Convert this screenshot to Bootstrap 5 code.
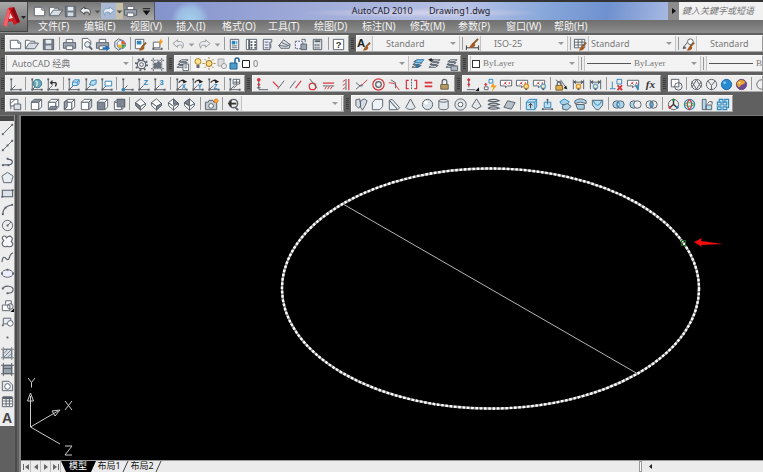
<!DOCTYPE html>
<html lang="zh-CN">
<head>
<meta charset="utf-8">
<meta name="viewport" content="width=device-width, initial-scale=1">
<title>AutoCAD 2010 Drawing1.dwg</title>
<link href="https://cdn.jsdelivr.net/npm/bootstrap@5.3.0/dist/css/bootstrap.min.css" rel="stylesheet">
<style>
:root{--face:#ededed;--frame:#606060;--ink:#59616b}
body{font:10px/12px "Noto Sans","Noto Sans CJK SC",sans-serif;background:var(--frame);color:#222;overflow:hidden}
button,select,input{font:inherit;color:inherit;border:0;border-radius:0;padding:0;margin:0;background:none}
svg{display:block}
.head{border-top:2px solid #333;background:linear-gradient(#888 18px,#6f6f6f 18px,#8d8d8d)}
.applogo{width:28px;height:30px;background:linear-gradient(#aaa,#686868);border-right:1px solid #444;border-bottom:1px solid #444}
.titlebar{height:18px}
.quick{width:127px;padding-left:4px;background:linear-gradient(#777,#aaa);border-right:1px solid #555}
.quick .tool{flex:1 1 16px}
.quick .tool.slim{flex:0 0 7px}
.quick .tool:nth-child(6){background:#a9b8d3}
.quick .tool:nth-child(7){background:#c6bfa9}
.caption-area{background:radial-gradient(circle at 35px 18px,#a4d0ee 0,#9bbce2 12px,transparent 19px),radial-gradient(ellipse at 52% 60%,#d3d3ea 0,transparent 32%),linear-gradient(100deg,#8493cc,#a6b1dc 38%,#b9c3e6 60%,#87a7da 76%,#6f91cf 88%,#a7b9e2);font-size:9px;color:#1c1c2c}
.caption-area span{white-space:pre}
.caption-left{flex:196 1 0}
.caption-right{flex:177 1 0}
.search-go{width:11px;background:#8c8c8c;color:#111}
.search-box{width:84px;background:#f1f1f1;font-size:9px;font-style:italic;padding-left:3px;outline:0}
.search-box::placeholder{color:#777;opacity:1}
.menus{height:13px;padding-left:10px}
.menus a{flex:0 0 auto;width:46px;color:#f4f4f4;text-decoration:none;line-height:13px;white-space:nowrap}
.menus .wide{width:48px}
.bars{padding:2px 0 3px;gap:3px;white-space:nowrap}
.strip{height:17px}
.grip{flex:0 0 5px;margin:0 1px;background:repeating-linear-gradient(#3c3c3c 0 1px,#5e5e5e 1px 2px) center/3px 12px no-repeat}
.grip:first-child{margin:0}
.bar{background:var(--face);border:1px solid #f8f8f8;border-right-color:#999;border-bottom-color:#aaa;padding:0 1px;flex:0 0 auto}
.bar.grow-bar{flex:1 1 0;overflow:hidden}
.tool{flex:1 1 17px;min-width:0;height:16px;display:flex;align-items:center;justify-content:center}
.tool:hover{background:#cfe2f5}
.tool svg{flex:none}
.tool.slim{flex:0 0 9px}
.split{flex:0 0 1px;margin:1px 2px;background:#999}
.drop{position:relative;display:flex;background:#f3f3f3;border:1px solid #c4c4c4;border-width:0 1px;color:#777;flex:0 0 auto}
.drop select{appearance:none;width:100%;outline:0;font-size:9px;line-height:15px}
.drop::after{content:"";position:absolute;right:3px;top:6px;border:3px solid transparent;border-top-color:#999;pointer-events:none}
.serif select{font-family:"Liberation Serif","Noto Sans CJK SC",serif;font-size:9px}
.pad-a select{padding-left:13px}.pad-b select{padding-left:2px}.pad-c select{padding-left:5px}
.swatch::before{content:"";align-self:center;flex:none;width:8px;height:8px;margin:0 3px 0 1px;border:1px solid #333;background:#fff}
.stroke::before{content:"";align-self:center;flex:none;width:44px;height:1px;margin:0 3px 0 2px;background:#555}
.w-style{width:88px}.w-space{width:127px}.w-layer{width:219px}.w-color{width:109px}.w-line{width:117px}.w-view{width:101px}
.t-std{width:344px}.t-space{width:162px}.t-layer{width:287px}.t-ucs{width:240px}.t-con{width:203px}.t-par{width:199px}.t-view{width:339px}.t-solid{width:382px}
.side{flex:0 0 15px;background:var(--face);align-self:flex-start;padding-bottom:1px;border-right:1px solid #999}
.side .tool{flex:none;height:16px;width:14px}
.side .handle{height:6px;background:#484848;border-top:1px solid #777}
.gutter{flex:0 0 6px;background:linear-gradient(90deg,#4c4c4c 2px,#606060 2px 4px,#808080 4px)}
.pane{min-width:0;min-height:0}
.board{background:#000;min-height:0;border-top:1px solid #777}
.board svg{width:100%;height:100%}
.foot{height:12px;flex:none;background:#ebebeb;border-top:1px solid #999;font-size:9px;line-height:9px}
.foot .step{width:10px;height:11px;border-right:1px solid #bbb;display:flex;align-items:center;justify-content:center}
.foot .sheet{width:26px;height:9px;color:#111;line-height:9px;white-space:nowrap}
.foot .sheet.on{width:24px;height:11px;padding-bottom:2px;background:#000;color:#fff}
.knob{width:3px;background:#fff;border:1px solid #999}
.foot-gap{flex:478 1 0}
.scroll-track{flex:107 1 0}
</style>
<script src="https://cdn.jsdelivr.net/npm/bootstrap@5.3.0/dist/js/bootstrap.bundle.min.js" defer></script>
</head>
<body class="d-flex flex-column vh-100">
<header class="head d-flex">
  <button class="applogo d-flex align-items-center justify-content-center" aria-label="应用程序菜单">
    <svg width="26" height="28" viewBox="0 0 26 28"><path d="M2 22 7 5l6-1 6 15-6 3-2-4-4 1-1 4z" fill="#d01a22"/><path d="M2 22 7 5l2 3-3 16z" fill="#f1606a"/><path d="m13 4 6 15-3 1L10 7z" fill="#8a0b11"/><path d="m9 10 3 5-4 1z" fill="#ddd"/><path d="M20 13h5l-2.500 3z" fill="#222"/></svg>
  </button>
  <div class="flex-grow-1 d-flex flex-column overflow-hidden">
    <div class="titlebar d-flex">
      <div class="quick d-flex align-items-center" data-tools="new open save undoL caret redoL caret print more"></div>
      <div class="caption-area flex-grow-1 d-flex align-items-center"><span class="caption-left"></span><span>AutoCAD 2010       Drawing1.dwg</span><span class="caption-right"></span></div>
      <button class="search-go d-flex align-items-center justify-content-center" aria-label="展开"><svg width="6" height="8"><path d="M1 1v6l4-3z" fill="#111"/></svg></button>
      <input class="search-box" type="text" aria-label="搜索" placeholder="鍵入关鍵字或短语">
    </div>
    <nav class="menus d-flex" aria-label="菜单">
      <a href="#">文件(F)</a><a href="#">编辑(E)</a><a href="#">视图(V)</a><a href="#">插入(I)</a><a href="#">格式(O)</a><a href="#">工具(T)</a><a href="#" class="wide">绘图(D)</a><a href="#" class="wide">标注(N)</a><a href="#" class="wide">修改(M)</a><a href="#" class="wide">参数(P)</a><a href="#" class="wide">窗口(W)</a><a href="#">帮助(H)</a>
    </nav>
  </div>
</header>

<section class="bars d-flex flex-column" aria-label="工具栏">
  <div class="strip d-flex">
    <i class="grip"></i>
    <div class="bar t-std d-flex" data-tools="new open save | print preview publish dwf | match block | undoG caretG redoG caretG | props center palette sheets markup calc | help"></div>
    <i class="grip"></i>
    <div class="bar grow-bar d-flex px-0">
      <div class="d-flex flex-shrink-0" data-tools="textstyle"></div>
      <label class="drop w-style pad-a"><select aria-label="文字样式"><option>Standard</option></select></label>
      <i class="split"></i><div class="d-flex flex-shrink-0" data-tools="dimstyle"></div>
      <label class="drop w-style pad-a"><select aria-label="标注样式"><option>ISO-25</option></select></label>
      <i class="split"></i><div class="d-flex flex-shrink-0" data-tools="tablestyle"></div>
      <label class="drop w-style pad-b"><select aria-label="表格样式"><option>Standard</option></select></label>
      <i class="split"></i><div class="d-flex flex-shrink-0" data-tools="leader"></div>
      <label class="drop w-style pad-a"><select aria-label="引线样式"><option>Standard</option></select></label>
    </div>
  </div>
  <div class="strip d-flex">
    <i class="grip"></i>
    <div class="bar t-space d-flex px-0">
      <label class="drop w-space pad-c"><select aria-label="工作空间"><option>AutoCAD 经典</option></select></label>
      <div class="d-flex flex-grow-1" data-tools="gear wsave"></div>
    </div>
    <i class="grip"></i>
    <div class="bar t-layer d-flex px-0">
      <div class="d-flex" data-tools="layers"></div>
      <label class="drop w-layer pad-b">
        <svg class="flex-shrink-0" width="60" height="15" viewBox="0 0 60 15"><circle cx="7" cy="5.500" r="3" fill="#ffe58a" stroke="#a98533"/><path d="M5.500 9h3v3h-3z" fill="#667"/><circle cx="18" cy="7.500" r="3" fill="#ffe27a" stroke="#996d22"/><path d="M18 1v2m0 9v2M11.500 7.500h2m9 0h2M13.500 3l1.500 1.500m6 6 1.500 1.500m0-9L21 4.500m-6 6L13.500 12" stroke="#b08538"/><path d="M27 3h6v7h-6z" fill="#ddd" stroke="#aaa"/><circle cx="33" cy="10" r="2.500" fill="#eee" stroke="#999"/><path d="M39 7h7v6h-7z" fill="#4b9dce" stroke="#24638f"/><path d="M44 7V4a2 2 0 0 1 4 0v2" fill="none" stroke="#24638f" stroke-width="1.500"/><path d="M51.500 4.500h7v7h-7z" fill="#fff" stroke="#222"/></svg>
        <select aria-label="图层"><option>0</option></select></label>
      <div class="d-flex flex-grow-1" data-tools="laymake layprev layerstate"></div>
    </div>
    <i class="grip"></i>
    <div class="bar grow-bar d-flex">
      <label class="drop w-color serif swatch"><select aria-label="颜色"><option>ByLayer</option></select></label>
      <i class="split"></i>
      <label class="drop w-line serif stroke"><select aria-label="线型"><option>ByLayer</option></select></label>
      <i class="split"></i>
      <label class="drop w-line serif stroke"><select aria-label="线宽"><option>ByLayer</option></select></label>
    </div>
  </div>
  <div class="strip d-flex">
    <i class="grip"></i>
    <div class="bar t-ucs d-flex" data-tools="ucs | ucsworld ucsprev | ucsface ucsobj ucsview | ucsorg ucsz ucs3 | ucsrx ucsry ucsrz | ucsapply"></div>
    <i class="grip"></i>
    <div class="bar t-con d-flex" data-tools="coincident perp parallel tangent horiz vert collinear concentric smooth symmetric equal fix"></div>
    <i class="grip"></i>
    <div class="bar t-par d-flex" data-tools="gcon autocon showcon showall hideall | dimcon dimshow dimhide | delcon consettings fx"></div>
    <i class="grip"></i>
    <div class="bar grow-bar d-flex px-0"><div class="d-flex flex-shrink-0" data-tools="wire2d | wire3d hidden realistic concept | manage"></div></div>
  </div>
  <div class="strip d-flex">
    <i class="grip"></i>
    <div class="bar t-view d-flex">
      <div class="d-flex flex-grow-1" data-tools="named | ctop cbottom cleft cright cfront cback | isw ise ine inw | camera | prevview"></div>
      <label class="drop w-view pad-b"><select aria-label="视口缩放"><option></option></select></label>
    </div>
    <i class="grip"></i>
    <div class="bar t-solid d-flex" data-tools="polysolid box wedge cone sphere cylinder torus pyramid helix plane | extrude presspull sweep revolve loft | union subtract intersect | orbit rotate3d align3d array3d"></div>
  </div>
</section>

<main class="pane d-flex flex-grow-1">
  <div class="side d-flex flex-column" aria-label="绘图">
    <div class="handle"></div>
    <div class="d-flex flex-column" data-tools="line xline pline polygon rect arc circle cloud spline ellipse earc insert mkblock point hatch gradient region table mtext"></div>
  </div>
  <div class="gutter"></div>
  <div class="pane flex-grow-1 d-flex flex-column">
    <div class="board flex-grow-1">
      <svg viewBox="21 116 742 344" role="img" aria-label="椭圆和直径线" fill="none">
        <ellipse cx="490.500" cy="288.500" rx="208.500" ry="120" stroke="#8f8f8f" stroke-width="2.400"/>
        <ellipse cx="490.500" cy="288.500" rx="208.500" ry="120" stroke="#fff" stroke-width="2.400" stroke-dasharray="2.500 1.800"/>
        <path d="m343 204 295 170" stroke="#b5b5b5"/>
        <path d="M681.500 240.500h4v5h-4z" stroke="#18751c"/>
        <path d="m694 242 8-4-1 3 22 3-22 1 1 2z" fill="#f20c0c"/>
        <g stroke="#ccc"><path d="M30.500 396v31L58 411M30.500 427 60 444"/><path d="m30.500 393-3 8h6zM60 410l-8 1 3 5z"/><path d="m28 378 3.500 4.500 3.500-4.500m-3.500 4.500v5M65 401l7 9m0-9-7 9M65 446h7l-7 9h7"/></g>
      </svg>
    </div>
    <footer class="foot d-flex">
      <button class="step" aria-label="第一个"><svg width="8" height="8"><path d="M1.500 1v6" stroke="#666"/><path d="M7 1v6L3 4z" fill="#666"/></svg></button>
      <button class="step" aria-label="上一个"><svg width="8" height="8"><path d="M6 1v6L2 4z" fill="#666"/></svg></button>
      <button class="step" aria-label="下一个"><svg width="8" height="8"><path d="M2 1v6l4-3z" fill="#666"/></svg></button>
      <button class="step" aria-label="最后一个"><svg width="8" height="8"><path d="M6.500 1v6" stroke="#666"/><path d="M1 1v6l4-3z" fill="#666"/></svg></button>
      <svg width="5" height="11"><path d="M0 0h5v11z" fill="#000"/></svg>
      <button class="sheet on">模型</button>
      <svg width="6" height="11"><path d="M0 0h6L1 11H0z" fill="#000"/></svg>
      <button class="sheet">布局1</button>
      <svg width="7" height="11"><path d="M6 0 1 11" stroke="#444"/></svg>
      <button class="sheet">布局2</button>
      <svg width="7" height="11"><path d="M6 0 1 11" stroke="#444"/></svg>
      <span class="foot-gap"></span>
      <i class="knob"></i>
      <button class="step border-0 ms-1" aria-label="向左滚动"><svg width="6" height="8"><path d="M4 1v5L1 3.500z" fill="#222"/></svg></button>
      <span class="scroll-track"></span>
    </footer>
  </div>
</main>

<script>
const K='#59616b', B='#2f86bd', R='#d8343c';
const p=(d,s=K,f='none',w=1)=>`<path d="${d}" stroke="${s}" fill="${f}" stroke-width="${w}"/>`;
const c=(x,y,r,s=K,f='none',w=1)=>`<circle cx="${x}" cy="${y}" r="${r}" stroke="${s}" fill="${f}" stroke-width="${w}"/>`;
const t=(x,y,s,col=B,size=8)=>`<text x="${x}" y="${y}" fill="${col}" font-size="${size}" font-weight="700" font-family="Liberation Sans,sans-serif">${s}</text>`;
const dots=(...a)=>a.map(([x,y])=>p(`M${x-1} ${y-1}h2v2h-2z`,'none',K)).join('');
const axes=p('M3.500 2v11.500H14M3.500 13.500 8 9')+dots([3.5,2.5],[3.5,13.5],[13.5,13.5]);
const brush=p('m14 6-4 4','#8b5a2b','none',2)+p('M10 9c-2 1-2 4-4 5 3 1 6 0 6-3z','none','#a9581f');
const cube=(a,b,d)=>p('M2.500 5.500h8v8h-8z',K,a)+p('m2.500 5.500 3-3h8l-3 3z',K,b)+p('m10.500 5.500 3-3v8l-3 3z',K,d);
const iso=(a,b,d)=>p('m8 2 5.500 5L8 10 2.500 6z',K,a)+p('M2.500 6 8 10v4L3 9.500z',K,b)+p('m13.500 7-.5 2.500L8 14v-4z',K,d);
const tag=p('M1.500 3.500h12v6H9l-2 2v-2H1.500z',K,'#fff')+p('m5 8 3-3m0 3-2-2',R)+c(11,6.5,.5,R,R);
const dim=p('M2.500 3v10M13.500 3v10M2.500 5.500h11')+p('m3 5.500 2-1.500v3zM13 5.500 11 4v3z',K,K);
const lock=(x,y)=>p(`M${x+1.5} ${y}v-2a2 2 0 0 1 4 0v2`,K,'none',1.3)+p(`M${x} ${y}h7v5h-7z`,'#7b622f','#dcae4a');
const bulb=(x,y,f)=>c(x,y,2.3,f,'#fff1b0',1.5)+p(`M${x} ${y+2}v2`,K,'none',2);
const printer=p('M4.500 6V2.500h7V6',K,'#fff')+p('M1.500 6h13v6h-13z',K,'#9aa3ae')+p('M4.500 9.500h7v4h-7z',K,'#fff');
const sheet=p('M2.500 3.500h8l3 3v6h-11z',K,'#fff')+p('M10.500 3.500v3h3',K,'#ccd');
const folder=p('M1.500 12.500v-9h4l1 1h5v3',K,'#fff')+p('m1.500 12.500 4-6h10l-4 6z',K,'#d8dde3');
const disk=p('M2.500 2.500h11v11h-11z',K,'#727a86',1)+p('M5 3h6v4H5z','none','#e9eef3')+p('M5 9h6v4H5z','none','#d3dae1');
const undo=s=>p('M7 3 2 7l5 4V9c4-1 5 0 5 3 3-5 0-8-5-7z',s,'#e9edf2');
const redo=s=>p('m9 3 5 4-5 4V9c-4-1-5 0-5 3-3-5 0-8 5-7z',s,'#e9edf2');
const stack=p('m4 5 3-2h7l-3 2zM3 8l3-2h7l-3 2zM2 11l3-2h7l-3 2z',K,'#dfe5ea');
const swirl=(a,b)=>c(6,8,4,K,a)+c(10,8,4,K,b);
const icons={
new:['新建',sheet],open:['打开',folder],save:['保存',disk],print:['打印',printer],
undoL:['放弃',undo('#444')],redoL:['重做',redo('#7d9dc0')],undoG:['放弃',undo('#999')],redoG:['重做',redo('#999')],
caret:['列表',p('M5 7h6l-3 3z','none','#555')],caretG:['列表',p('M5 7h6l-3 3z','none','#999')],more:['自定义',p('M4 5h8',"#111")+p('M4 7h8l-4 5z','none','#111')],
preview:['打印预览',p('M3.500 13.500v-12h6l3 3v4',K,'#fff')+c(9,8,3,K,'#e8f0f6')+p('m11 10 3 3.500',K,'none',2)],
publish:['发布',printer+p('M8 11h4V8.500l4 3.500-4 3.500V13H8z','none','#1c72bd')],
dwf:['三维DWF',p('m3 5 4-3 5 2v7l-5 3-4-3z',K,'#e3e7ec')+c(10,8,4.5,'#5a79a2','#fff')+p('M10 8V4a4 4 0 0 1 4 4z','none','#e45238')+p('M10 8h4a4 4 0 0 1-4 4z','none','#45a64c')+p('M10 8v4a4 4 0 0 1-4-4z','none','#f0b43a')],
match:['特性匹配',p('M2.500 2.500h9v10h-9z',K,'#fff')+p('M4 4h5v4H4z','none',B)+brush],
block:['块编辑器',p('M3.500 5.500h7v6h-7z',K,'#fff')+dots([3.5,12.5],[12.5,12.5])+p('M3 13h10')+p('m12 1-3 5h2l-1 4 4-6h-2z','none','#f19b17')],
props:['特性',p('M3.500 2.500h9v11h-9z',K,'#fff')+p('M5 4h4v4H5zM10 4h1v4h-1z','none',B)+p('M5 9.500h6M5 11.500h6')],
center:['设计中心',p('M2.500 2.500h11v11h-11z',K,'#fff')+p('M5.500 3v10M7 5.500h2m2 0h2M7 8.500h2m2 0h2M7 11.500h2m2 0h2',K,'none',2)],
palette:['工具选项板',p('M3.500 2.500h9v3h-2v8h-7z',K,'#eef')+p('M5 5.500h4M5 8.500h4M5 11.500h4M11.500 7v5')],
sheets:['图纸集',p('m2 9 5-6 7 5-1 4H4z',K,'#dfe4ea')+p('m2 9 8 1 4-2M5 6l7 3')],
markup:['标记集',p('M2.500 4.500h8v8h-8z',K,'#eef','1" stroke-dasharray="2 1')+p('M8.500 7.500h6v6h-6z',K,'#9aa5b2')+p('M9 2.500h4v3')],
calc:['计算器',p('M3.500 2.500h9v11h-9z',K,'#e0e4e8')+p('M5 4.500h6',K,'none',2)+p('M5 8.500h6M5 11.500h6',K,'none','2" stroke-dasharray="1 1')],
help:['帮助',p('M2.500 2.500h11v11h-11z',K,'#fff')+t(5,12,'?','#333',10)],
textstyle:['文字样式',t(0,11,'A','#222',12)+brush],dimstyle:['标注样式',p('M1.500 9v5M14.500 9v5M2 11.500h12','#333')+p('m14 2-6 6','#8b5a2b','none',2)+p('M9 6c-2 0-3 4-5 5 3 1 7 0 7-3z','none','#a9581f')],
tablestyle:['表格样式',p('M1.500 2.500h11v9h-11z',K,'#fff')+p('M2 5.500h10M2 8.500h10M5.500 3v8M9.500 3v8')+brush],leader:['多重引线样式',p('m2 12 6-8')+c(10,5,3,K,'#fff')+p('m2 13 4-1-3-3z','none',K)+brush],
gear:['设置',c(8,8,4.5,K,'none',1.3)+c(8,8,2)+c(8,8,6,K,'none','2" stroke-dasharray="2 2.700')],
wsave:['工作空间',p('M3.500 1v14M12.500 1v14M1 3.500h14M1 12.500h14',K,'none','1" stroke-dasharray="2 1')+p('M4 6h3l2-2 3 2v6H4z','none','#69727e')],
layers:['图层特性',stack+p('M8.500 7.500h6v7h-6z',K,'#fff')+p('M10 9.500h3m-3 2h3')],laymake:['置为当前',stack+p('m5 6 3-3h7l-3 3z',B,'#8cc5e8')+p('M9 7c-2 0-2 3-4 4 3 1 5 0 5-2z','none','#2c74a6')],layprev:['上一个图层',stack+p('m1 3 4-2v4z','none','#222')+p('M3 3h4','#222')],layerstate:['图层状态',stack+p('M7.500 9.500h7v5h-7z',K,'#aeb8c4')],
ucs:['UCS',axes],ucsworld:['世界',axes+c(9,7,4.5,'#38778a','#68a7bd')+p('m7 4 2 2-1 4','#d6efe0','none',1.5)],ucsprev:['上一个',axes+p('M7 6h4q2 1 0 4','#333','none',1.5)+p('m5 6 3-3v6z','none','#333')],
ucsface:['面',axes+p('M7 5.500 9 3h5v4l-2 2H7zM7 5.500h5V9M12 5.500 14 3',B,'#d9edf8')],ucsobj:['对象',axes+p('m7 8 2-4 5-1v4l-3 2z',B,'#b8dbed')],ucsview:['视图',axes+p('M6.500 4.500h7v5h-7z',B,'#fff')],ucsorg:['原点',axes+c(3.5,13.5,1.5,B,B)],ucsz:['Z轴',axes+t(8,8,'Z')],ucs3:['三点',axes+t(8,9,'3')],
...Object.fromEntries(['x','y','z'].map(a=>['ucsr'+a,['旋转'+a,axes+p('M5 6q3-4 6-1','#222','none',1.300)+p('m9 2 5 3-4 2z','none','#222')+t(8,13,a.toUpperCase(),B,7)]])),
ucsapply:['应用',axes+p('M6.500 2.500h7v5h-7zM10 3v5M7 5.500h7M7 12l4-4',K,'#fff')],
coincident:['重合',p('M4 3v8',K)+c(4,3,1.5,R,R)+c(4,8,1,R,R)+p('M4 13.500h10M2 11.500h4M4 9v4')],perp:['垂直',p('m7 13 7-9')+p('m2 5 6 6',R,'none',1.3)],parallel:['平行',p('m2 12 6-8')+p('m8 12 6-8',R,'none',1.3)],tangent:['相切',c(8,10,3.5,R,'none',1.3)+p('m5 2 8 10')],horiz:['水平',p('M2 6.500h12',R,'none',1.3)+p('M2 9.500h12')+p('m4 13 2-3m1 3 2-3m1 3 2-3',R)],vert:['竖直',p('M11.500 2v12',R,'none',1.3)+p('M8.500 2v12')+p('m5 5 3-2M5 9l3-2m-3 6 3-2',R)],collinear:['共线',p('m8 9 6-6',R)+p('m2 13 5-4M2 6l5 4')+dots([8,9])],concentric:['同心',c(8,8,6,R,'none',1.3)+c(8,8,3,K,'none',1.3)],smooth:['平滑',p('m2 6 6 1 5 7',R)+p('m4 3 5 3v6')],symmetric:['对称',p('M8 2v12',K,'none','1" stroke-dasharray="2 1')+p('M5 3.500H2.500v9H5M11 3.500h2.500v9H11',R,'none',1.3)],equal:['相等',p('M4 6h8M4 10h8',R,'none',2)],fix:['固定',p('M5.500 8V5a2.500 2.500 0 0 1 5 0v3',K,'none',1.3)+p('M4 8h8v5H4z','#6c6047','#b69a62')],
gcon:['几何约束',p('M4 3v8m-2 2.500h9')+c(4,3,1.2,R,R)+c(4,8,1,R,R)+p('M15 11v4h-4z','none','#111')],autocon:['自动约束',p('M7.500 2.500h4v4h-4z',B,'#e7f3fa')+p('M2.500 10.500h4v3h-4z',K,'#fff')+p('m12 6-3 5h3l-2 5 6-7h-3z','none','#f0a225')+c(4,8,1,R,R)],showcon:['显示约束',tag],showall:['全部显示',tag+bulb(12,10,'#e1942c')],hideall:['全部隐藏',tag+bulb(12,10,'#68a5cf')],
dimcon:['标注约束',p('m7 3 7 10M2 3l6 5')+lock(2,9)+p('m14 13-4-1 3-3z','none','#222')],dimshow:['显示标注',dim+bulb(8,10,'#e1942c')],dimhide:['隐藏标注',dim+bulb(8,10,'#68a5cf')],delcon:['删除约束',p('M8.500 2.500h5v5h-5zM3.500 5v7M1 12.500h6',B)+p('m9 9 5 5m0-5-5 5',R,'none',2)],consettings:['约束设置',tag+p('m10 8 3 6m0-7v6',B,'none',1.5)],fx:['参数',`<text x="3" y="12" font-family="Liberation Serif,serif" font-style="italic" font-weight="700" font-size="12" fill="#333">fx</text>`],
wire2d:['二维线框',p('M2.500 2.500h8v8h-8z',K,'#fff')+c(10,10,4)],wire3d:['三维线框',c(8,8,5.5)+p('m3 5 5 8 5-8M3 11l5-8 5 8')],hidden:['三维隐藏',c(8,8,5.5)+p('m4 4 4 5 4-5M8 9v5')],realistic:['真实',c(8,8,5.5,'#25679e','#268bd0')+c(6,6,1.5,'none','#86c5ee')],concept:['概念',c(8,8,5.5,'#724878','#6a4a94')+p('M3 6a5.500 5.500 0 0 1 9-1c-1 4-5 2-6 6-2 0-3-3-3-5z','none','#eaa132')+c(6,6,1,'none','#fff1a0')],manage:['管理',c(8,8,5)],
named:['命名视图',p('M2.500 2.500h8v7h-8z',K,'#fff')+p('M6.500 7.500h7v6h-7z',K,'#dce2e8')+p('m3 7 4-4M3 13V9')],
ctop:['俯视',cube('#fff','#9199a5','#fff')],cbottom:['仰视',cube('#fff','#fff','#fff')+p('m3 13 2-3h7l-2 3z',K,'#8a929e')],cleft:['左视',cube('#fff','#fff','#fff')+p('m2.500 5.500 3-2v7l-3 3z',K,'#9aa2ad')],cright:['右视',cube('#fff','#fff','#c3c9d0')],cfront:['主视',cube('#7d8692','#fff','#fff')],cback:['后视',cube('#fff','#fff','#fff')+p('M5.500 2.500h8v8h-8z',K,'#7d8692')],
isw:['西南',iso('#fff','#7c8591','#fff')],ise:['东南',iso('#fff','#fff','#7c8591')],ine:['东北',iso('#fff','#fff','#fff')+p('m8 2 5.500 5L8 8z',K,'#7c8591')],inw:['西北',iso('#fff','#fff','#fff')+p('M8 2 2.500 6 8 9z',K,'#7c8591')],
camera:['相机',p('M1.500 5.500h3l1-2h4l1 2h3v8h-12z',K,'#c4cad1')+c(7.5,9.5,2.5,K,'#fff')+c(13,4,2,'#ee7d20','#ffb233')],prevview:['上一个视图',c(9,7,4.5,K,'none',1.5)+p('m11 11 3 3',K,'none',2)+p('m3 7 4-4v3h5v2H7v3z','none','#333')],
polysolid:['多段体',p('m2 3 4-1 1 7-2 3-3-3zM7 4l4-2 3 2-2 5-3 5-2-3z',K,'#d6dde5')],box:['长方体',p('m2.500 6 3-3.500h8V10l-3 3.500h-8z',K,'#eef2f6')],wedge:['楔体',p('M2.500 3.500v10h9z',K,'#eef2f6')+p('m2.500 3.500 3-1 8 9-2 2z',K,'#e3e8ed')],cone:['圆锥体',p('m8 2 5 9c-1 3-9 3-10 0z',K,'#e3e8ed')],sphere:['球体',c(8,8,5.5,K,'#d9e1e9')+c(6.5,6,2,'none','#fff')],cylinder:['圆柱体',p('M3 4v8c1 2 9 2 10 0V4c-1-2-9-2-10 0c1 2 9 2 10 0',K,'#e3e8ed')],torus:['圆环体',c(8,8,6,K,'#e3e8ed')+c(8,8,2.5,K,'#fff')],pyramid:['棱锥体',p('m8 2 5 8-5 3-5-3z',K,'#e3e8ed')],helix:['螺旋',p('M2 4q6-3 12 0-6 2-12 0m0 4q6-3 12 0-6 2-12 0m0 4q6-3 12 0-6 2-12 0',K,'none',1.3)],plane:['平面曲面',p('m2 11 4-7 8 2-4 7z',K,'#b7bfc9')],
extrude:['拉伸',p('M2.500 5.500h9v8h-9zM2.500 5.500l3-3h8v8l-2 3M11.500 5.500l2-3',B,'#bfe0f0')+p('M7 12V7M5 9l2-2 2 2','#333')],presspull:['按住并拖动',p('M4.500 5.500h7v6h-7z',B,'#bfe0f0')+dots([3,13],[13,13],[8,3])+p('M3 13h10M8 3v5')],sweep:['扫掠',p('m3 5 5-3 5 3-2 3H5z',B,'#a6d3ea')+p('m6 9 5-2 4 3-4 4-5-1z',K,'#a6d3ea')],revolve:['旋转',p('M2 4q6-4 12 0v3q-6-3-12 0zM3 8h9v5H5z',K,'#a6d3ea')],loft:['放样',p('M2.500 3.500h11v5l-4 5h-3l-4-5z',K,'#b7ddf0')+p('M3 3q5 12 10 0',B)],
union:['并集',swirl('#a8d4ec','#a8d4ec')+p('M8 5q-2 3 0 6 2-3 0-6',B,'#fff')],subtract:['差集',swirl('#a8d4ec','#eee')],intersect:['交集',swirl('none','none')+p('M8 5q-2 3 0 6 2-3 0-6',B,'#78b9df')],
orbit:['三维移动',p('M8 8V2M8 8l-5 4M8 8l5 4','#333','none',1.5)+c(8,8,5.5,K)+c(8,3,1,'#2a8f45','#2a8f45')+c(4,11,1,R,R)+c(12,11,1,B,B)],rotate3d:['三维旋转',c(8,8,5.5,B,'none',1.3)+p('M8 2.500q-5 5 0 11 5-6 0-11',R,'none',1.300)+p('M2.500 8q5-4 11 0-6 4-11 0','#3ba45a')],align3d:['三维对齐',p('M3.500 2.500h4v11h-4zM7.500 8.500h6v5h-6z',K,'#b2d9ec')+p('m9 7 2-2h3v3')],array3d:['三维阵列',p('M2.500 5.500h4v3h-4zM8.500 5.500h4v3h-4zM2.500 10.500h4v3h-4zM8.500 10.500h4v3h-4zM4.500 5.500v-3h4v3M10.500 5.500v-3h4v9h-2',B,'#c8e6f4',1.2)],
line:['直线',p('M3 13 13 3')+dots([3,13],[13,3])],xline:['构造线',p('M2 14 14 2')+dots([3,13],[8,8],[13,3])],pline:['多段线',p('M3 11.500h7q4-1 3-4-1-2-5-2',K,'none',1.3)+dots([3,12],[9,12],[8,5])],polygon:['正多边形',p('m8 2.500 6 4-2 7H4l-2-7z',K,'#e8edf2')],rect:['矩形',p('M2.500 4.500h11v7h-11z',K,'#dce2e9',1.2)+dots([2.5,11.5],[13.5,4.5])],arc:['圆弧',p('M3 13q0-8 10-10',K,'none',1.2)+dots([3,13],[6,6],[13,3])],circle:['圆',c(8,8,5.5)+p('m8 8 4-4')+dots([8,8])],cloud:['修订云线',p('M4 7C0 3 5 0 7 4c4-4 8 0 5 4 4 3 0 7-4 5-4 2-8-2-4-6z',K,'#f5f7fa',1.2)],spline:['样条曲线',p('M2 13C4 0 8 16 10 8q1-4 4-5',K,'none',1.2)],ellipse:['椭圆',`<ellipse cx="8" cy="8" rx="6" ry="4" fill="#eef" stroke="${K}"/>`+dots([2,8],[8,4],[14,8])],earc:['椭圆弧',p('M3 7c2-4 11-3 11 1 0 3-3 4-6 4',K,'none',1.2)+dots([3,7],[8,12])],insert:['插入块',p('M2.500 7.500h8v6h-8zM6 7V3h6v4',K,'#fff')+c(11,9,3)+p('M15 11v4h-4z','none','#111')],mkblock:['创建块',p('M3.500 4.500h8v6h-8z',K,'#e8edf2')+c(11,10,3,K,'#fff')+dots([3,12])],point:['点',dots([8,8])],hatch:['图案填充',p('M3.500 3.500h9v9h-9z',K,'#d8dde3')+p('m4 8 4-4M4 12l8-8M8 12l4-4M1 3.500h14M1 12.500h14M3.500 1v14M12.500 1v14','#7b838d')],gradient:['渐变色',p('M3.500 3.500h9v9h-9z',K,'#9aa2ad')+p('M1 3.500h14M1 12.500h14M3.500 1v14M12.500 1v14M4 7h8')],region:['面域',p('M2.500 13.500v-10h7l4 4v6z',K,'#e8edf2')+c(8,9,3,K,'#fff')],table:['表格',p('M2.500 3.500h11v10h-11z',K,'#fff')+p('M3 4h10',K,'none',3)+p('M3 7.500h10M3 10.500h10M6.500 5v8M10 5v8')],mtext:['多行文字',t(2,14,'A','#444',15)]
};
document.querySelectorAll('[data-tools]').forEach(bar=>{
  bar.innerHTML=bar.dataset.tools.split(' ').map(n=>n==='|'?'<i class="split"></i>':
    `<button class="tool${n.startsWith('caret')?' slim':''}" aria-label="${icons[n][0]}"><svg width="15" height="15" viewBox="0 0 16 16">${icons[n][1]}</svg></button>`).join('');
});
</script>
</body>
</html>
